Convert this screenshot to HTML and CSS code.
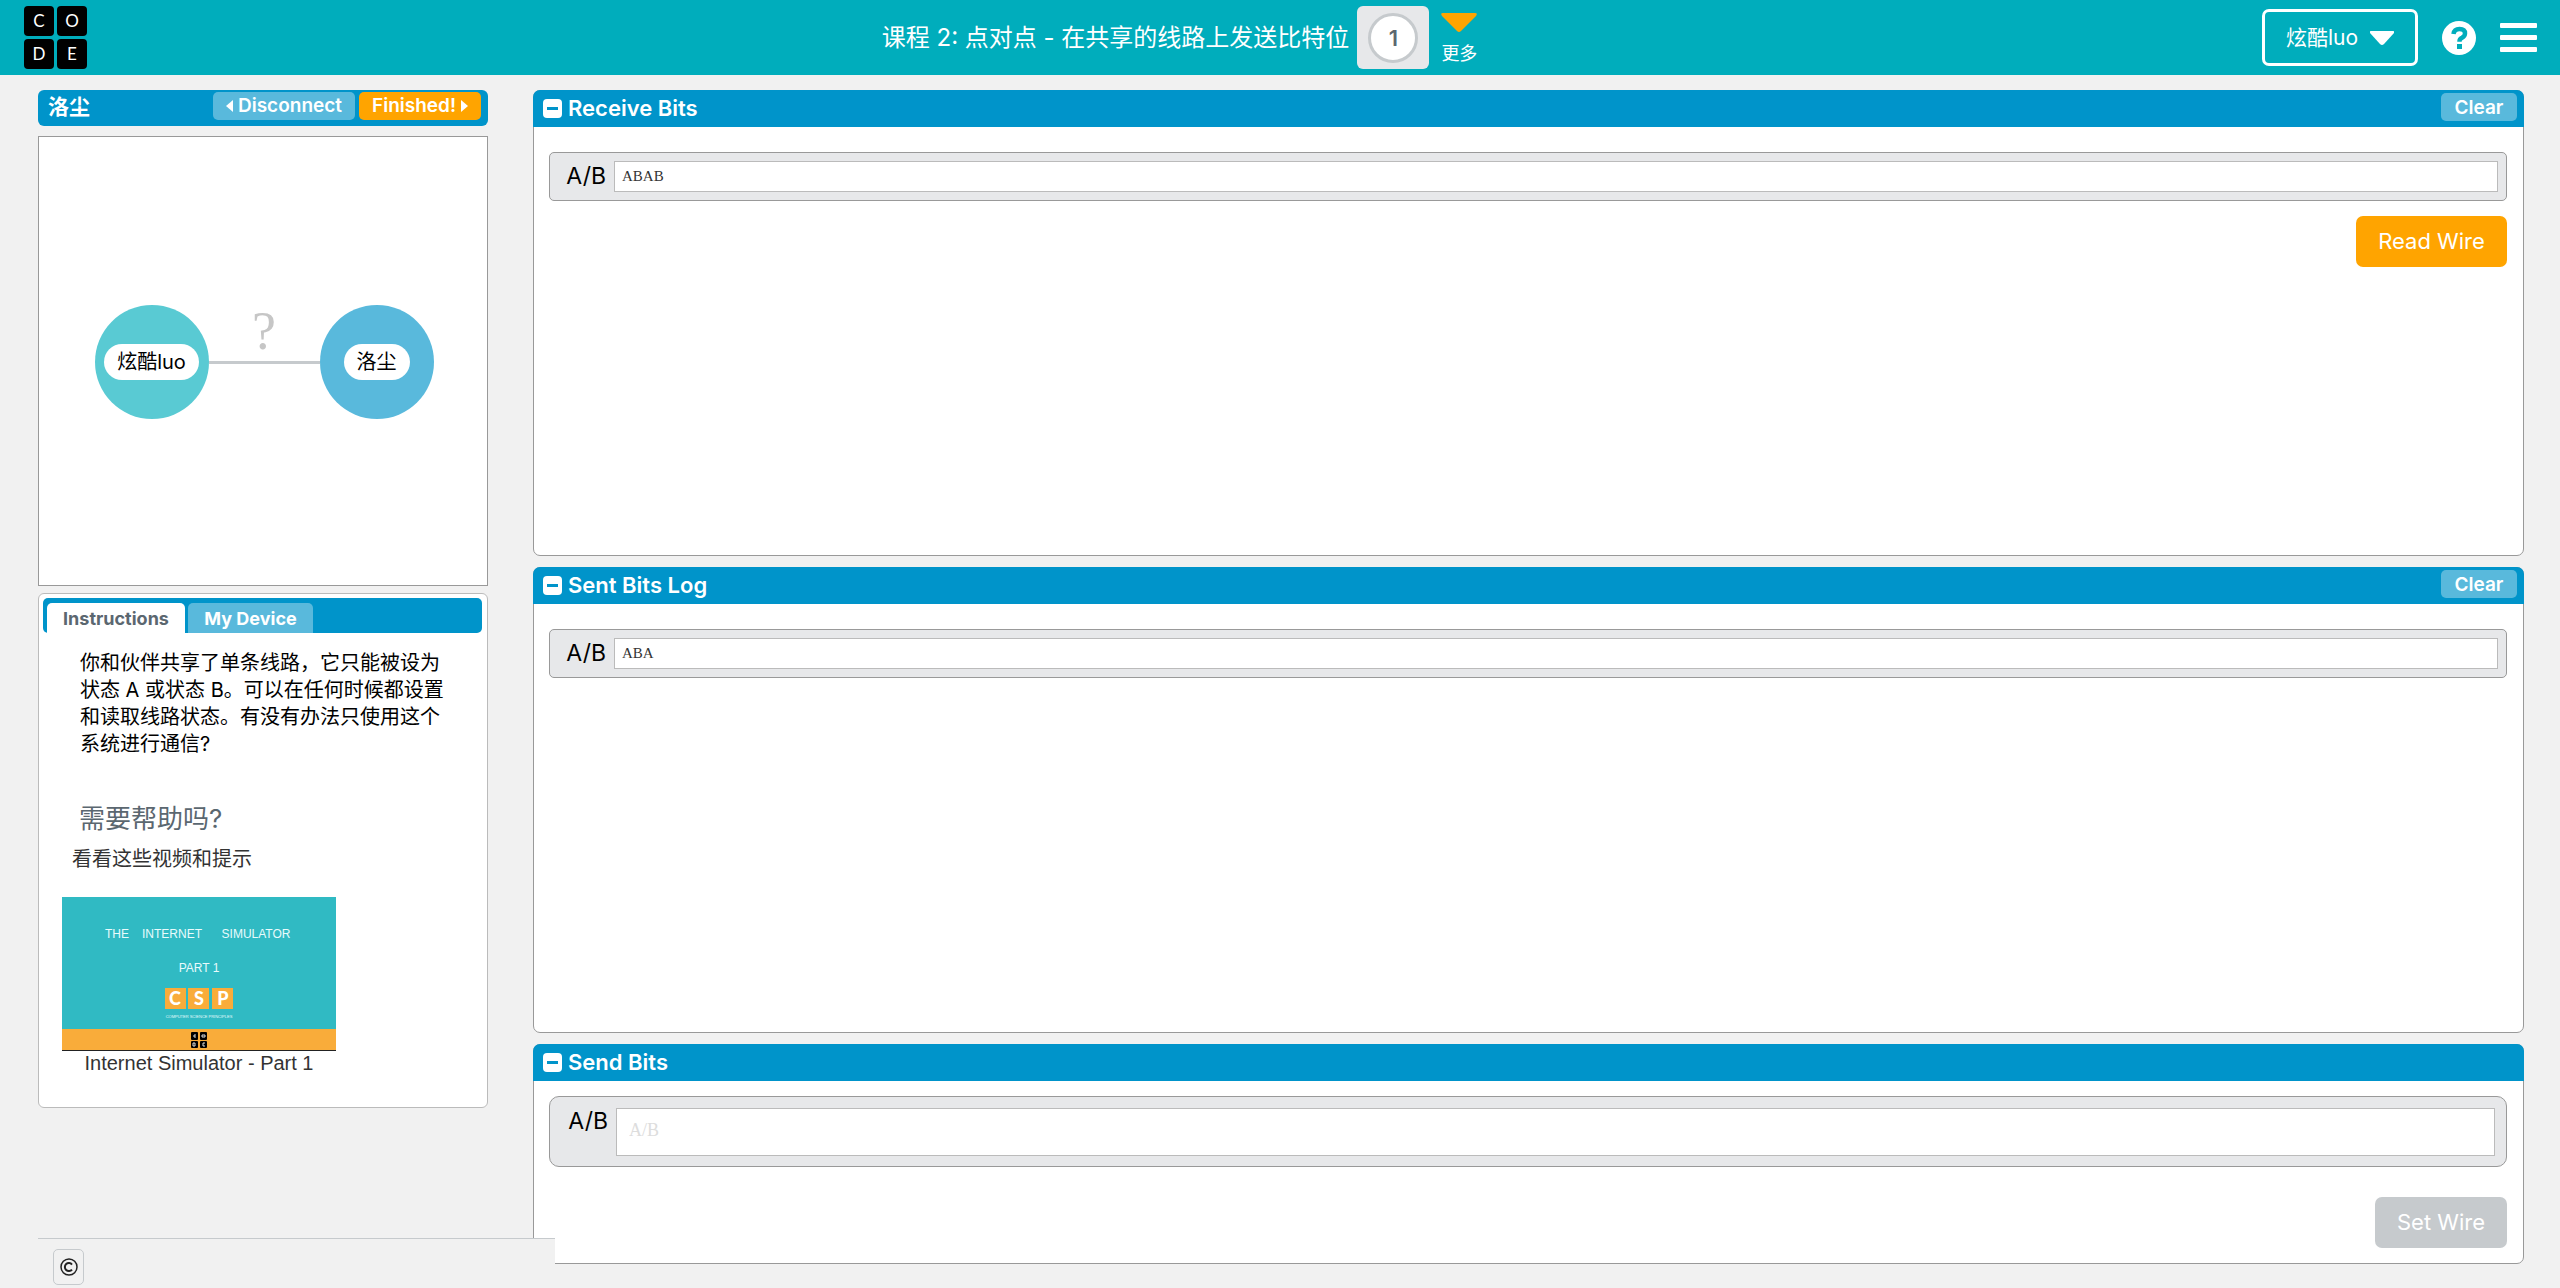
FILE: index.html
```html
<!DOCTYPE html>
<html lang="zh-CN">
<head>
<meta charset="utf-8">
<title>Internet Simulator</title>
<link rel="stylesheet" href="styles.css">
</head>
<body>
<header class="topbar">
  <a class="logo" href="#" aria-label="Code"><span>C</span><span>O</span><span>D</span><span>E</span></a>
  <div class="lesson">
    <span class="lesson-title">课程 2: 点对点 - 在共享的线路上发送比特位</span>
    <a class="level" href="#"><span class="level-dot">1</span></a>
    <a class="more" href="#"><svg width="36" height="20" viewBox="0 0 36 20"><path d="M2 0h32q3 0 1 3L20 18q-2 2-4 0L1 3Q-1 0 2 0z" fill="#ffa400"/></svg><span>更多</span></a>
  </div>
  <div class="account">
    <button class="user">炫酷luo<svg width="24" height="14" viewBox="0 0 24 14"><path d="M1 0h22q2 0 1 2L14 13q-2 2-4 0L0 2Q-1 0 1 0z" fill="#fff"/></svg></button>
    <button class="icon-btn" aria-label="Help"><svg width="34" height="34" viewBox="0 0 34 34"><circle cx="17" cy="17" r="17" fill="#fff"/><path d="M11.5 13q.7-5 6-5 5.500 0 5.500 4.500 0 2.500-3 4.200-2.500 1.300-2.500 3.300v.8" fill="none" stroke="#00adbc" stroke-width="4.500"/><rect x="15" y="23" width="5" height="5" fill="#00adbc"/></svg></button>
    <button class="icon-btn" aria-label="Menu"><svg width="37" height="30" viewBox="0 0 37 30" fill="#fff"><rect width="37" height="5" rx="1"/><rect y="12" width="37" height="5" rx="1"/><rect y="24" width="37" height="5" rx="1"/></svg></button>
  </div>
</header>

<main class="layout">
  <aside class="side">
    <div class="peer-bar">
      <h2>洛尘</h2>
      <button class="chip chip-disconnect"><svg width="7" height="12" viewBox="0 0 7 12"><path d="M7 0v12L0 6z" fill="#fff"/></svg>Disconnect</button>
      <button class="chip chip-finished">Finished!<svg width="7" height="12" viewBox="0 0 7 12"><path d="M0 0v12l7-6z" fill="#fff"/></svg></button>
    </div>
    <div class="network">
      <div class="node node-local"><span>炫酷luo</span></div>
      <div class="wire"><span>?</span></div>
      <div class="node node-remote"><span>洛尘</span></div>
    </div>
    <section class="guide">
      <div class="tabs" role="tablist">
        <button class="tab tab-active" role="tab">Instructions</button>
        <button class="tab" role="tab">My Device</button>
      </div>
      <p class="guide-text">你和伙伴共享了单条线路，它只能被设为状态 A 或状态 B。可以在任何时候都设置和读取线路状态。有没有办法只使用这个系统进行通信?</p>
      <h3>需要帮助吗?</h3>
      <p class="guide-hint">看看这些视频和提示</p>
      <a class="video" href="#">
        <svg width="274" height="154" viewBox="0 0 274 154">
          <rect width="274" height="133" fill="#30bac3"/>
          <rect y="132" width="274" height="21" fill="#f9ac3a"/>
          <rect y="153" width="274" height="1" fill="#222"/>
          <g class="slide-text">
            <text x="55" y="41" font-size="12" text-anchor="middle">THE</text>
            <text x="110" y="41" font-size="12" text-anchor="middle">INTERNET</text>
            <text x="194" y="41" font-size="12" text-anchor="middle">SIMULATOR</text>
            <text x="137" y="75" font-size="12" text-anchor="middle">PART 1</text>
            <text x="137" y="121" font-size="4" text-anchor="middle">COMPUTER SCIENCE PRINCIPLES</text>
          </g>
          <g fill="#f9ac3a"><rect x="103" y="91" width="21" height="21"/><rect x="126" y="91" width="21" height="21"/><rect x="150" y="91" width="21" height="21"/></g>
          <g class="slide-mark"><text x="113" y="108">C</text><text x="137" y="108">S</text><text x="161" y="108">P</text></g>
          <g><rect x="129" y="135" width="7" height="8" rx="1"/><rect x="138" y="135" width="7" height="8" rx="1"/><rect x="129" y="144" width="7" height="7" rx="1"/><rect x="138" y="144" width="7" height="7" rx="1"/></g>
          <g fill="none" stroke="#ddd"><path d="M134 138h-2v2h2M140 138h3v2h-3zM131 146h2v3h-2zM143 146h-2v3h2"/></g>
        </svg>
        <span>Internet Simulator - Part 1</span>
      </a>
    </section>
  </aside>

  <div class="panels">
    <section class="panel">
      <header class="panel-head"><button class="fold" aria-label="Collapse"></button><h2>Receive Bits</h2><button class="chip chip-clear">Clear</button></header>
      <div class="panel-body">
        <div class="bits"><label for="received">A/B</label><input id="received" value="ABAB" readonly></div>
        <button class="action action-read">Read Wire</button>
      </div>
    </section>
    <section class="panel">
      <header class="panel-head"><button class="fold" aria-label="Collapse"></button><h2>Sent Bits Log</h2><button class="chip chip-clear">Clear</button></header>
      <div class="panel-body">
        <div class="bits"><label for="sent">A/B</label><input id="sent" value="ABA" readonly></div>
      </div>
    </section>
    <section class="panel panel-send">
      <header class="panel-head"><button class="fold" aria-label="Collapse"></button><h2>Send Bits</h2></header>
      <div class="panel-body">
        <div class="bits bits-edit"><label for="send">A/B</label><input id="send" placeholder="A/B"></div>
        <button class="action action-set" disabled>Set Wire</button>
      </div>
    </section>
  </div>
</main>

<footer class="footer"><button aria-label="Copyright"><svg width="18" height="18" viewBox="0 0 18 18" fill="none" stroke="#222"><circle cx="9" cy="9" r="8" stroke-width="1.500"/><path d="M12 6.500a4 4 0 1 0 0 5" stroke-width="2"/></svg></button></footer>
</body>
</html>
```
FILE: styles.css
```css
* { box-sizing: border-box; }

body {
  margin: 0;
  background: #f1f1f1;
  color: #000;
  font: 20px/27px Inter, "Noto Sans CJK SC", sans-serif;
}

h2, h3, p { margin: 0; }
a { color: inherit; text-decoration: none; }
svg { display: block; }

button {
  margin: 0;
  padding: 0;
  border: 0;
  background: none;
  color: #fff;
  font: inherit;
  cursor: pointer;
}

/* Top bar */
.topbar {
  display: grid;
  grid-template-columns: 17fr auto 21fr;
  align-items: center;
  height: 75px;
  padding: 0 23px 0 24px;
  background: #00adbc;
  color: #fff;
}

.logo {
  display: grid;
  grid-template-columns: 30px 30px;
  gap: 3px;
  width: 63px;
  font: 17px/30px Lato, sans-serif;
  text-align: center;
}

.logo span { border-radius: 4px; background: #000; }

.lesson { display: flex; align-items: center; }
.lesson-title { font-size: 24px; }

.level {
  display: grid;
  place-items: center;
  width: 72px;
  height: 63px;
  margin: 0 12px 0 8px;
  border-radius: 6px;
  background: #e7e8ea;
}

.level-dot {
  width: 50px;
  height: 50px;
  border: 3px solid #c6cacd;
  border-radius: 50%;
  background: #fff;
  color: #5b6770;
  font: 600 22px/44px Inter, sans-serif;
  text-align: center;
}

.more {
  display: flex;
  flex-direction: column;
  gap: 9px;
  padding-top: 3px;
  font-size: 18px;
  line-height: 24px;
}

.account {
  display: flex;
  justify-content: flex-end;
  align-items: center;
}

.user {
  display: flex;
  justify-content: center;
  align-items: center;
  gap: 12px;
  width: 156px;
  height: 57px;
  border: 3px solid #fff;
  border-radius: 7px;
  font-size: 21px;
}

.icon-btn { margin-left: 24px; }

/* Columns */
.layout {
  display: flex;
  align-items: stretch;
  gap: 45px;
  min-height: calc(100vh - 75px);
  padding: 15px 36px 24px 38px;
}

.side { flex: none; width: 450px; }
.panels { display: flex; flex: 1; flex-direction: column; gap: 11px; }

.chip {
  height: 28px;
  border-radius: 5px;
  background: #59b9dc;
  font-weight: 600;
  font-size: 19px;
  line-height: 30px;
}

.peer-bar {
  display: flex;
  align-items: center;
  height: 36px;
  padding: 0 7px 4px 10px;
  border-radius: 6px;
  background: #0094ca;
}

.peer-bar h2 {
  margin-right: auto;
  color: #fff;
  font-size: 21px;
}

.peer-bar .chip {
  display: flex;
  justify-content: center;
  align-items: center;
  gap: 5px;
}

.chip-disconnect { width: 142px; margin-right: 4px; }
.chip-finished { width: 122px; background: #ffa400; }

/* Network diagram */
.network {
  display: flex;
  justify-content: center;
  align-items: center;
  aspect-ratio: 1;
  margin-top: 10px;
  padding: 2px 0 0 2px;
  border: 1px solid #999;
  background: #fff;
}

.node {
  display: grid;
  place-items: center;
  width: 114px;
  height: 114px;
  border-radius: 50%;
}

.node span {
  padding: 0 13px;
  border-radius: 18px;
  background: #fff;
  line-height: 36px;
}

.node-local { background: #59cad3; }
.node-remote { background: #59b9dc; }

.wire {
  position: relative;
  width: 111px;
  height: 3px;
  background: #c6cacd;
  text-align: center;
}

.wire span {
  position: absolute;
  right: 0;
  bottom: 3px;
  left: 0;
  color: #c6c6c6;
  font: 54px/60px "Liberation Serif", serif;
}

/* Instructions */
.guide {
  min-height: 515px;
  margin-top: 7px;
  padding: 4px;
  border: 1px solid #bbb;
  border-radius: 6px;
  background: #fff;
}

.tabs {
  display: flex;
  align-items: flex-end;
  gap: 3px;
  height: 35px;
  margin-right: 1px;
  padding-left: 4px;
  border-radius: 5px;
  background: #0094ca;
}

.tab {
  width: 125px;
  height: 30px;
  border-radius: 5px 5px 0 0;
  background: #59b9dc;
  font-weight: 700;
  font-size: 18px;
}

.tab-active { width: 138px; background: #fff; color: #5b6770; }

.guide-text { width: 372px; margin: 17px 0 0 37px; }

.guide h3 {
  margin: 45px 0 0 36px;
  color: #5b6770;
  font-weight: 400;
  font-size: 26px;
  line-height: 32px;
}

.guide-hint { margin: 11px 0 0 29px; color: #333; }

.video {
  display: block;
  width: 274px;
  margin: 24px 0 0 19px;
  color: #333;
  font-family: "Liberation Sans", sans-serif;
  line-height: 25px;
  text-align: center;
}

.slide-text { fill: #e8fbfc; font-family: "Liberation Sans", sans-serif; }
.slide-mark { fill: #fff; font: 900 18px Lato, sans-serif; text-anchor: middle; }

/* Bit panels */
.panel {
  flex: 1;
  border: 1px solid #999;
  border-radius: 7px;
  background: #fff;
}

.panel-send { flex: none; height: 220px; }

.panel-head {
  display: flex;
  align-items: center;
  gap: 6px;
  height: 37px;
  margin: -1px -1px 0;
  padding: 0 7px 0 10px;
  border-radius: 7px 7px 0 0;
  background: #0094ca;
  color: #fff;
}

.panel-head h2 { font-weight: 600; font-size: 22px; }
.chip-clear { width: 76px; margin: 0 0 3px auto; }

.fold {
  display: grid;
  place-items: center;
  width: 19px;
  height: 19px;
  border-radius: 4px;
  background: #fff;
}

.fold::before {
  width: 11px;
  height: 3px;
  background: #0094ca;
  content: "";
}

.panel-body {
  display: flex;
  flex-direction: column;
  align-items: flex-end;
  padding: 25px 16px 0 15px;
}

.bits {
  display: flex;
  align-items: center;
  gap: 8px;
  width: 100%;
  height: 49px;
  padding: 0 8px 0 16px;
  border: 1px solid #999;
  border-radius: 5px;
  background: #e7e8ea;
}

.bits label { width: 40px; font-size: 23px; text-align: right; }

.bits input {
  flex: 1;
  height: 31px;
  padding: 0 7px;
  border: 1px solid #bbb;
  background: #fff;
  color: #333;
  font: 15px "Liberation Serif", serif;
}

.panel-send .panel-body { padding-top: 15px; }

.bits-edit {
  align-items: flex-start;
  height: 71px;
  padding: 11px 11px 0 18px;
  border-radius: 10px;
}

.bits .bits-edit input { height: 48px; }
.bits-edit #send { height: 48px; padding: 0 12px 4px; font-size: 18px; }
.bits-edit input::placeholder { color: #ddd; opacity: 1; }

.action {
  height: 51px;
  margin-top: 15px;
  border-radius: 7px;
  font-size: 22px;
}

.action-read { width: 151px; background: #ffa400; }
.action-set { width: 132px; margin-top: 30px; background: #c6cacd; }

/* Footer */
.footer {
  position: fixed;
  bottom: 0;
  left: 38px;
  width: 517px;
  height: 50px;
  padding: 10px 15px 0;
  border-top: 1px solid #c6cacd;
  background: #f1f1f1;
}

.footer button {
  display: grid;
  place-items: center;
  width: 31px;
  height: 36px;
  border: 1px solid #c6cacd;
  border-radius: 5px;
}
```
